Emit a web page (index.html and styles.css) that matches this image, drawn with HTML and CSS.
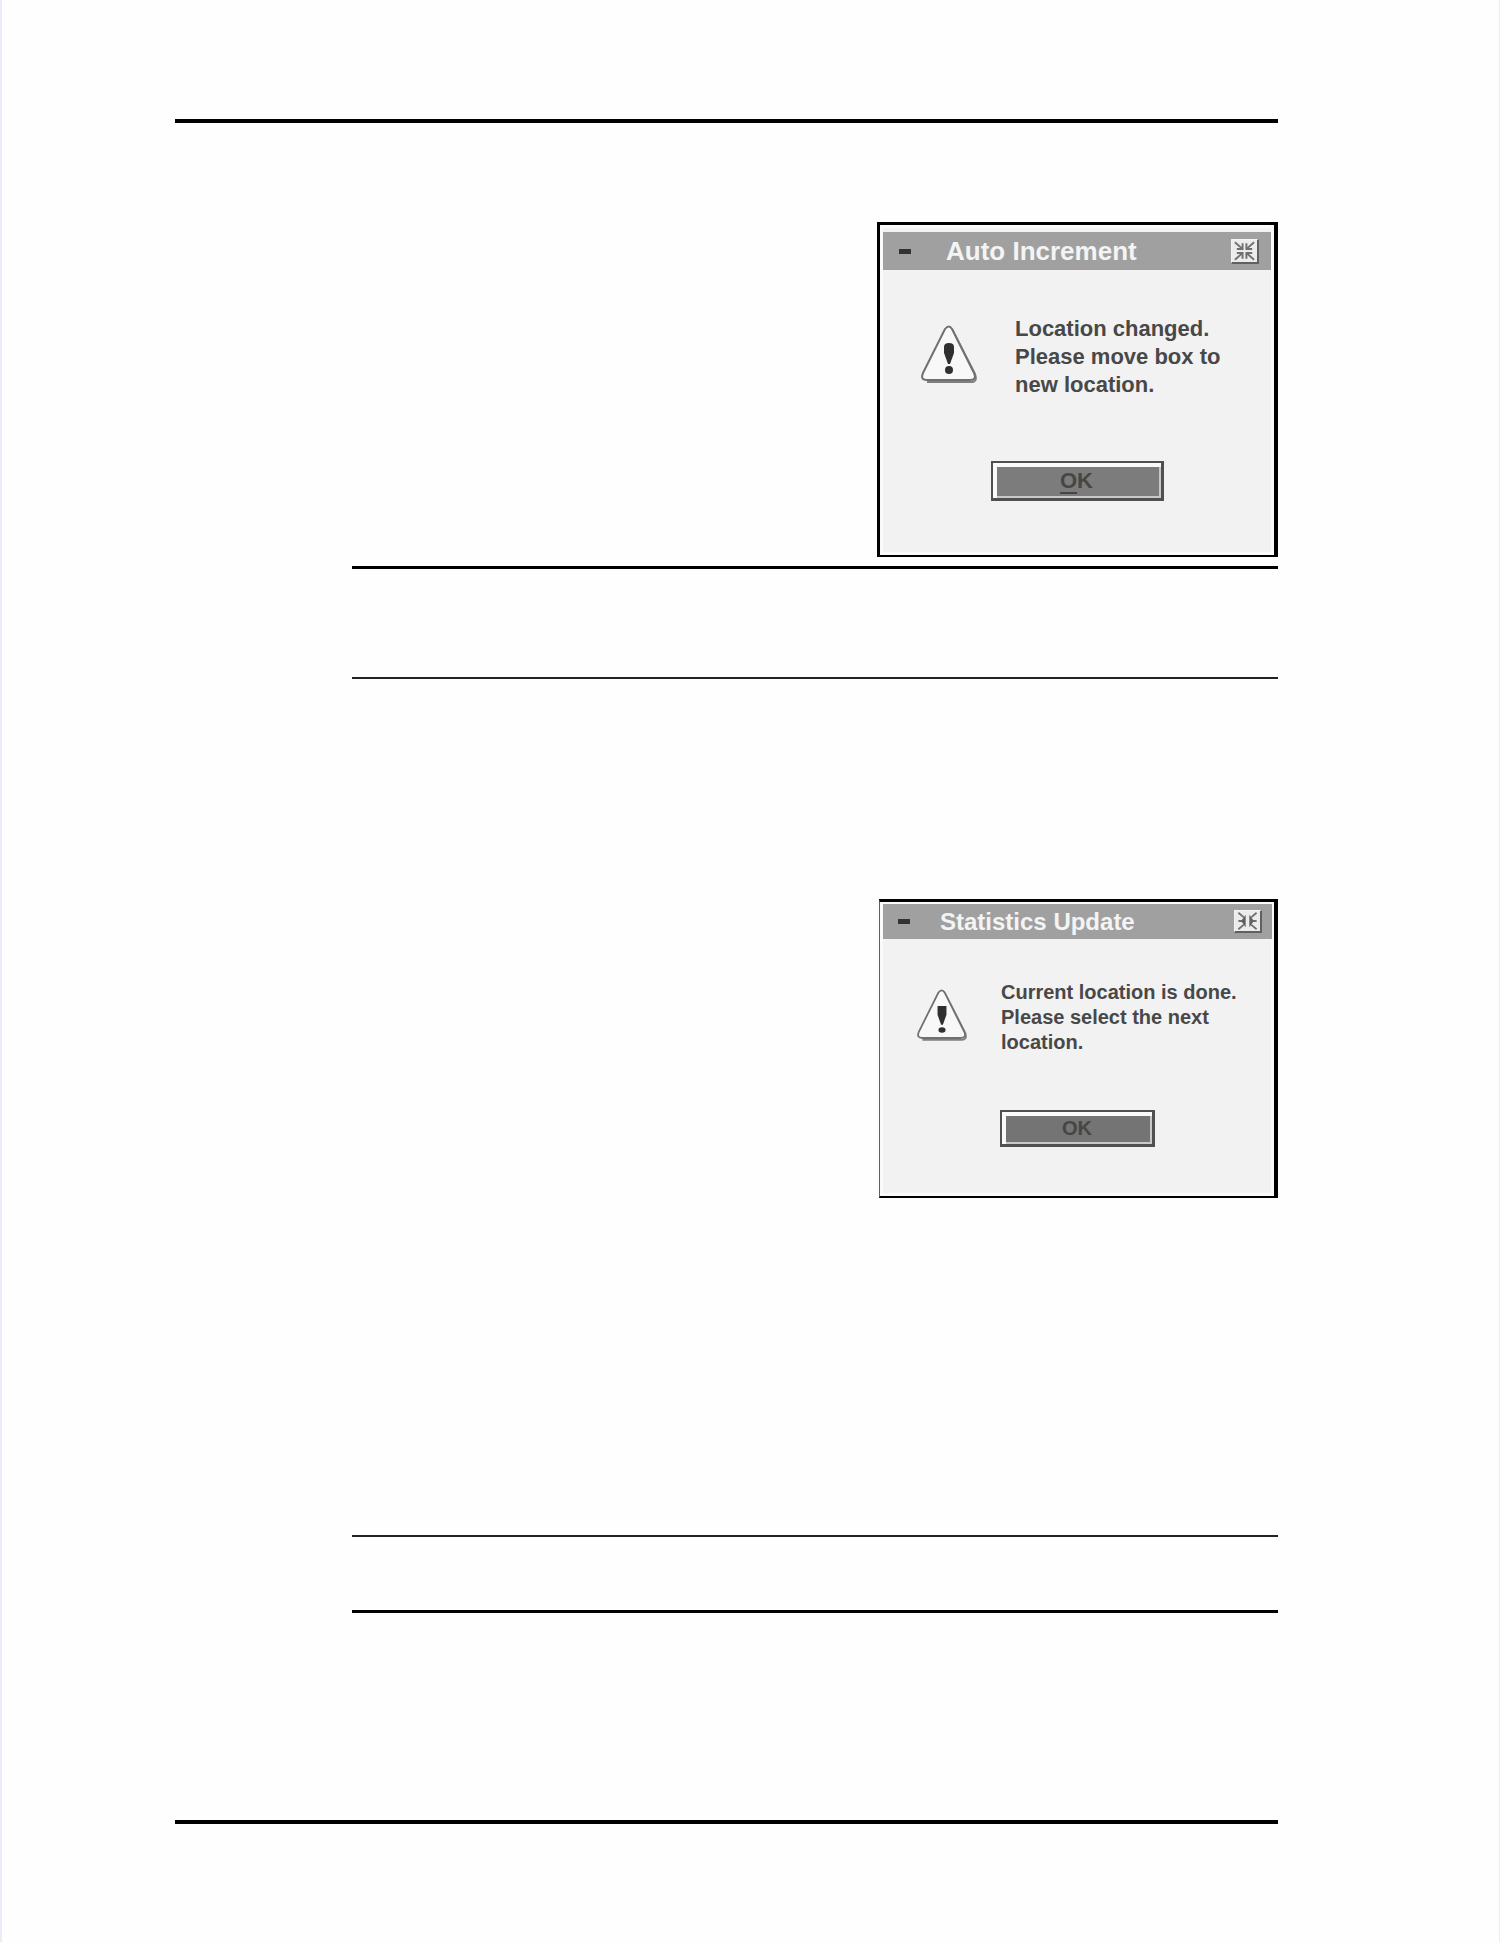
FILE: index.html
```
<!DOCTYPE html>
<html lang="en">
<head>
  <meta charset="UTF-8" />
  <meta name="viewport" content="width=device-width, initial-scale=1.0" />
  <title>Auto Increment</title>
  <link rel="stylesheet" href="styles.css">
</head>
<body>
  <main class="page">
    <hr class="rule rule-heavy" />

    <!-- Auto Increment dialog -->
    <section class="dialog" role="alertdialog" aria-labelledby="incrementTitle" aria-describedby="incrementText">
      <header class="title-bar">
        <span class="menu-dash"></span>
        <h2 id="incrementTitle">Auto Increment</h2>
        <button type="button" class="shrink" aria-label="Minimize">
          <svg viewBox="0 0 26 22">
            <path d="M3 2l7 6M23 2l-7 6M3 20l7-6M23 20l-7-6" />
            <path d="M11 3v6H5M15 3v6h6M11 19v-6H5M15 19v-6h6" />
          </svg>
        </button>
      </header>
      <div class="message">
        <svg class="warning" viewBox="0 0 56 64">
          <path class="shade" d="M31 4l23 45q3 8-4 8H6" />
          <path class="outline" d="M24 4q4-5 7 0l22 44q3 7-4 7H6q-7 0-4-7z" />
          <path class="mark" d="M23 22q0-4 5-4t5 4v6l-4 11h-2l-4-11z" />
          <circle class="mark" cx="28" cy="45" r="4" />
        </svg>
        <p id="incrementText">Location changed.<br />Please move box to<br />new location.</p>
      </div>
      <button type="button" class="ok"><span class="key">O</span>K</button>
    </section>

    <div class="block block-top">
      <hr class="rule rule-thick" />
      <hr class="rule rule-thin" />
    </div>

    <!-- Statistics Update dialog -->
    <section class="dialog dialog-small" role="alertdialog" aria-labelledby="statsTitle" aria-describedby="statsText">
      <header class="title-bar">
        <span class="menu-dash"></span>
        <h2 id="statsTitle">Statistics Update</h2>
        <button type="button" class="shrink" aria-label="Minimize">
          <svg viewBox="0 0 26 22">
            <path d="M3 2l6 5M23 2l-6 5M3 20l6-5M23 20l-6-5M3 11h4M19 11h4" />
            <path class="solid" d="M11 4v14l-5-7zM15 4v14l5-7z" />
          </svg>
        </button>
      </header>
      <div class="message">
        <svg class="warning" viewBox="0 0 56 64">
          <path class="shade" d="M31 4l23 45q3 8-4 8H6" />
          <path class="outline" d="M24 4q4-5 7 0l22 44q3 7-4 7H6q-7 0-4-7z" />
          <path class="mark" d="M23 19h10v10l-4 11h-2l-4-11z" />
          <ellipse class="mark" cx="28" cy="46" rx="4" ry="3" />
        </svg>
        <p id="statsText">Current location is done.<br />Please select the next<br />location.</p>
      </div>
      <button type="button" class="ok">OK</button>
    </section>

    <div class="block block-bottom">
      <hr class="rule rule-thin" />
      <hr class="rule rule-thick" />
    </div>

    <hr class="rule rule-heavy" />
  </main>
</body>
</html>
```

FILE: styles.css
```
* {
  box-sizing: border-box;
}

body {
  margin: 0;
  background-color: #fefefe;
  font-family: "Liberation Sans", Arial, sans-serif;
}

.page {
  display: flex;
  flex-direction: column;
  min-height: 100vh;
  padding: 119px 221px 118px 173px;
  border-left: 2px solid #ebebfa;
  border-right: 1px solid #ececf2;
}

/* Rules */
.rule {
  width: 100%;
  margin: 0;
  border: none;
  background-color: #000000;
}

.rule-heavy {
  height: 4px;
}

.rule-thick {
  height: 3px;
}

.rule-thin {
  height: 2px;
  background-color: #222222;
}

.block {
  display: flex;
  flex-direction: column;
  margin-left: 177px;
}

.block-top {
  gap: 108px;
  margin-top: 9px;
  margin-bottom: 220px;
}

.block-bottom {
  gap: 73px;
  margin-top: 337px;
  margin-bottom: 207px;
}

/* Dialogs */
.dialog {
  display: flex;
  flex-direction: column;
  align-self: flex-end;
  width: 401px;
  max-width: 100%;
  margin-top: 99px;
  padding: 7px 3px 54px;
  border: 3px solid #000000;
  border-right-width: 4px;
  border-bottom-width: 2px;
  background-color: #f2f2f2;
  box-shadow: inset 0 0 0 3px #fafafa;
  color: #484848;
  font-size: 22px;
  line-height: 28px;
}

.title-bar {
  display: flex;
  align-items: center;
  height: 38px;
  padding: 0 12px 0 16px;
  background-color: #a0a0a0;
}

.title-bar h2 {
  flex: 1;
  margin: 0 0 0 35px;
  color: #f4f4f4;
  font-size: 26px;
  line-height: 38px;
}

.menu-dash {
  width: 12px;
  height: 5px;
  background-color: #333333;
}

.shrink {
  display: flex;
  width: 28px;
  height: 25px;
  padding: 0;
  border: 1px solid #f4f4f4;
  border-right: 2px solid #606060;
  border-bottom: 2px solid #606060;
  background-color: #ececec;
}

.shrink svg {
  width: 100%;
  height: 100%;
  fill: none;
  stroke: #707070;
  stroke-width: 2;
}

.shrink .solid {
  fill: #606060;
  stroke: none;
}

.message {
  display: flex;
  align-items: center;
  gap: 38px;
  margin-top: 45px;
  padding-left: 38px;
}

.message p {
  margin: 0;
  font-weight: bold;
  white-space: nowrap;
}

.warning {
  flex: none;
  width: 56px;
  height: 64px;
}

.warning .outline {
  fill: #f8f8f8;
  stroke: #707070;
  stroke-width: 2;
}

.warning .shade {
  fill: none;
  stroke: #808080;
  stroke-width: 2;
}

.warning .mark {
  fill: #303030;
}

.ok {
  align-self: center;
  width: 173px;
  height: 40px;
  margin-top: 62px;
  padding: 0;
  border: 2px solid #505050;
  border-right-width: 3px;
  border-bottom-width: 3px;
  background-color: #7c7c7c;
  box-shadow: inset 4px 4px #fafafa, inset -2px -2px #c8c8c8;
  color: #464646;
  font-family: inherit;
  font-size: 22px;
  font-weight: bold;
  line-height: 28px;
}

.key {
  text-decoration: underline;
  text-decoration-thickness: 2px;
  text-underline-offset: 4px;
}

.dialog-small {
  width: 399px;
  margin-top: 0;
  padding: 2px 2px 49px 3px;
  border-left: 1px solid #606060;
  font-size: 20px;
  line-height: 25px;
}

.dialog-small .title-bar {
  height: 35px;
  padding: 0 10px 0 15px;
}

.dialog-small h2 {
  margin-left: 30px;
  font-size: 24px;
  line-height: 35px;
}

.dialog-small .shrink {
  height: 23px;
}

.dialog-small .message {
  gap: 34px;
  margin-top: 41px;
  padding-left: 34px;
}

.dialog-small .warning {
  width: 50px;
  height: 57px;
}

.dialog-small .ok {
  width: 155px;
  height: 37px;
  margin-top: 55px;
  background-color: #747474;
  font-size: 20px;
  line-height: 25px;
}
```
